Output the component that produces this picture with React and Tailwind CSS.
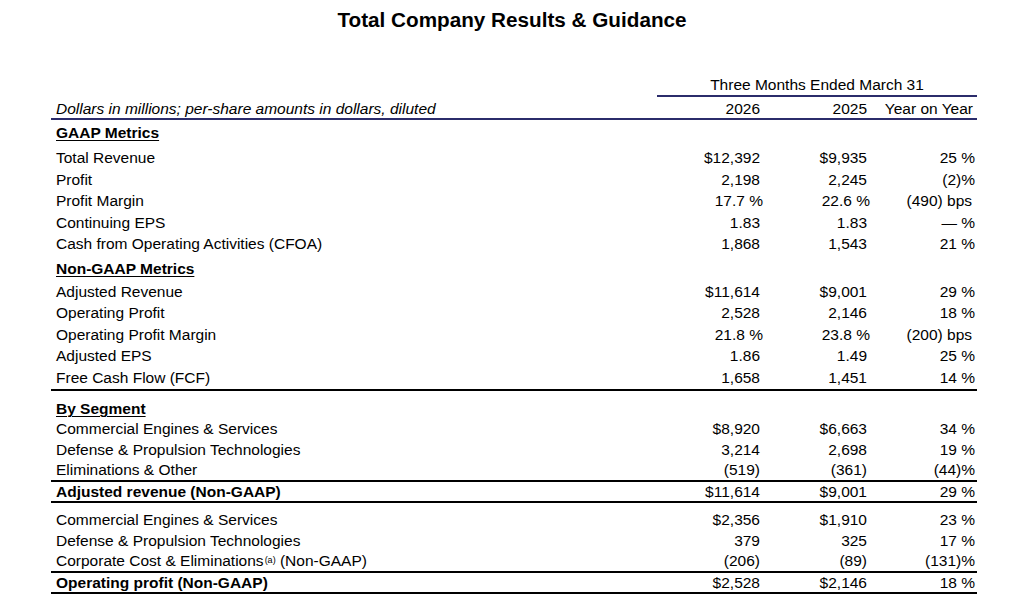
import React from 'react';

const gaap = [
  ['Total Revenue', '$12,392', '$9,935', '25 %'],
  ['Profit', '2,198', '2,245', '(2)%'],
  ['Profit Margin', '17.7 %', '22.6 %', '(490) bps'],
  ['Continuing EPS', '1.83', '1.83', '— %'],
  ['Cash from Operating Activities (CFOA)', '1,868', '1,543', '21 %'],
];

const nonGaap = [
  ['Adjusted Revenue', '$11,614', '$9,001', '29 %'],
  ['Operating Profit', '2,528', '2,146', '18 %'],
  ['Operating Profit Margin', '21.8 %', '23.8 %', '(200) bps'],
  ['Adjusted EPS', '1.86', '1.49', '25 %'],
  ['Free Cash Flow (FCF)', '1,658', '1,451', '14 %'],
];

const segRevenue = [
  ['Commercial Engines & Services', '$8,920', '$6,663', '34 %'],
  ['Defense & Propulsion Technologies', '3,214', '2,698', '19 %'],
  ['Eliminations & Other', '(519)', '(361)', '(44)%'],
];

const segProfit = [
  ['Commercial Engines & Services', '$2,356', '$1,910', '23 %'],
  ['Defense & Propulsion Technologies', '379', '325', '17 %'],
  ['Corporate Cost & Eliminations', '(206)', '(89)', '(131)%', true],
];

// values ending in " %" hang a little past the column edge, like the source report
const Num = ({ v, yoy }) => {
  const hang = v.endsWith(' %') && !yoy;
  const bps = v.endsWith('bps');
  return (
    <div className={`text-right font-normal ${yoy ? (bps ? 'pr-[5px]' : 'pr-[2px]') : 'pr-[4px]'}`}>
      <span className={hang ? 'mr-[-3px]' : ''}>{v}</span>
    </div>
  );
};

const Row = ({ r, h = 'h-[21.5px]', bold }) => (
  <div className={`grid grid-cols-[606px_107px_107px_106px] items-center ${h}`}>
    <div className={`pl-[5px] whitespace-nowrap ${bold ? 'font-bold' : ''}`}>
      {r[0]}
      {r[4] && <sup className="text-[9px] relative top-[-3px] ml-[1px]">(a)</sup>}
      {r[4] && ' (Non-GAAP)'}
    </div>
    <Num v={r[1]} />
    <Num v={r[2]} />
    <Num v={r[3]} yoy />
  </div>
);

const Heading = ({ children, h = 'h-[26px]', pt = 'pt-[2px]' }) => (
  <div className={`${h} ${pt} pl-[5px] font-bold underline decoration-1 underline-offset-2`}>{children}</div>
);

export default function App() {
  return (
    <div className="w-[1024px] h-[614px] bg-white text-black font-['Liberation_Sans',Arial,sans-serif] text-[15.5px] leading-none">
      <div className="pt-[10px] text-center text-[20.7px] font-bold h-[73px]">Total Company Results &amp; Guidance</div>

      <div className="ml-[51px] w-[926px]">
        <div className="grid grid-cols-[606px_320px]">
          <div />
          <div className="h-[24px] pt-[1px] flex items-center justify-center border-b-2 border-[#2b2c6b]">Three Months Ended March 31</div>
        </div>
        <div className="grid grid-cols-[606px_107px_107px_106px] h-[23px] pt-[2px] items-center border-b-2 border-[#2b2c6b]">
          <div className="pl-[5px] italic">Dollars in millions; per-share amounts in dollars, diluted</div>
          <div className="text-right pr-[4px]">2026</div>
          <div className="text-right pr-[4px]">2025</div>
          <div className="text-right pr-[4px]">Year on Year</div>
        </div>

        <Heading h="h-[27px]" pt="pt-[5px]">GAAP Metrics</Heading>
        {gaap.map((r) => <Row key={r[0]} r={r} />)}
        <Heading pt="pt-[6px]">Non-GAAP Metrics</Heading>
        <div className="border-b-2 border-black pb-[1px]">
          {nonGaap.map((r) => <Row key={r[0]} r={r} />)}
        </div>

        <div className="pt-[7px] border-b-2 border-black">
          <Heading h="h-[20.5px]" pt="pt-[3px]">By Segment</Heading>
          {segRevenue.map((r) => <Row key={r[0]} r={r} h="h-[20.5px]" />)}
        </div>
        <div className="border-b-2 border-black">
          <Row r={['Adjusted revenue (Non-GAAP)', '$11,614', '$9,001', '29 %']} h="h-[18.5px]" bold />
        </div>

        <div className="pt-[7px] border-b-2 border-black">
          {segProfit.map((r) => <Row key={r[0]} r={r} h="h-[20.5px]" />)}
        </div>
        <div className="border-b-2 border-black">
          <Row r={['Operating profit (Non-GAAP)', '$2,528', '$2,146', '18 %']} h="h-[18.5px]" bold />
        </div>
      </div>
    </div>
  );
}
